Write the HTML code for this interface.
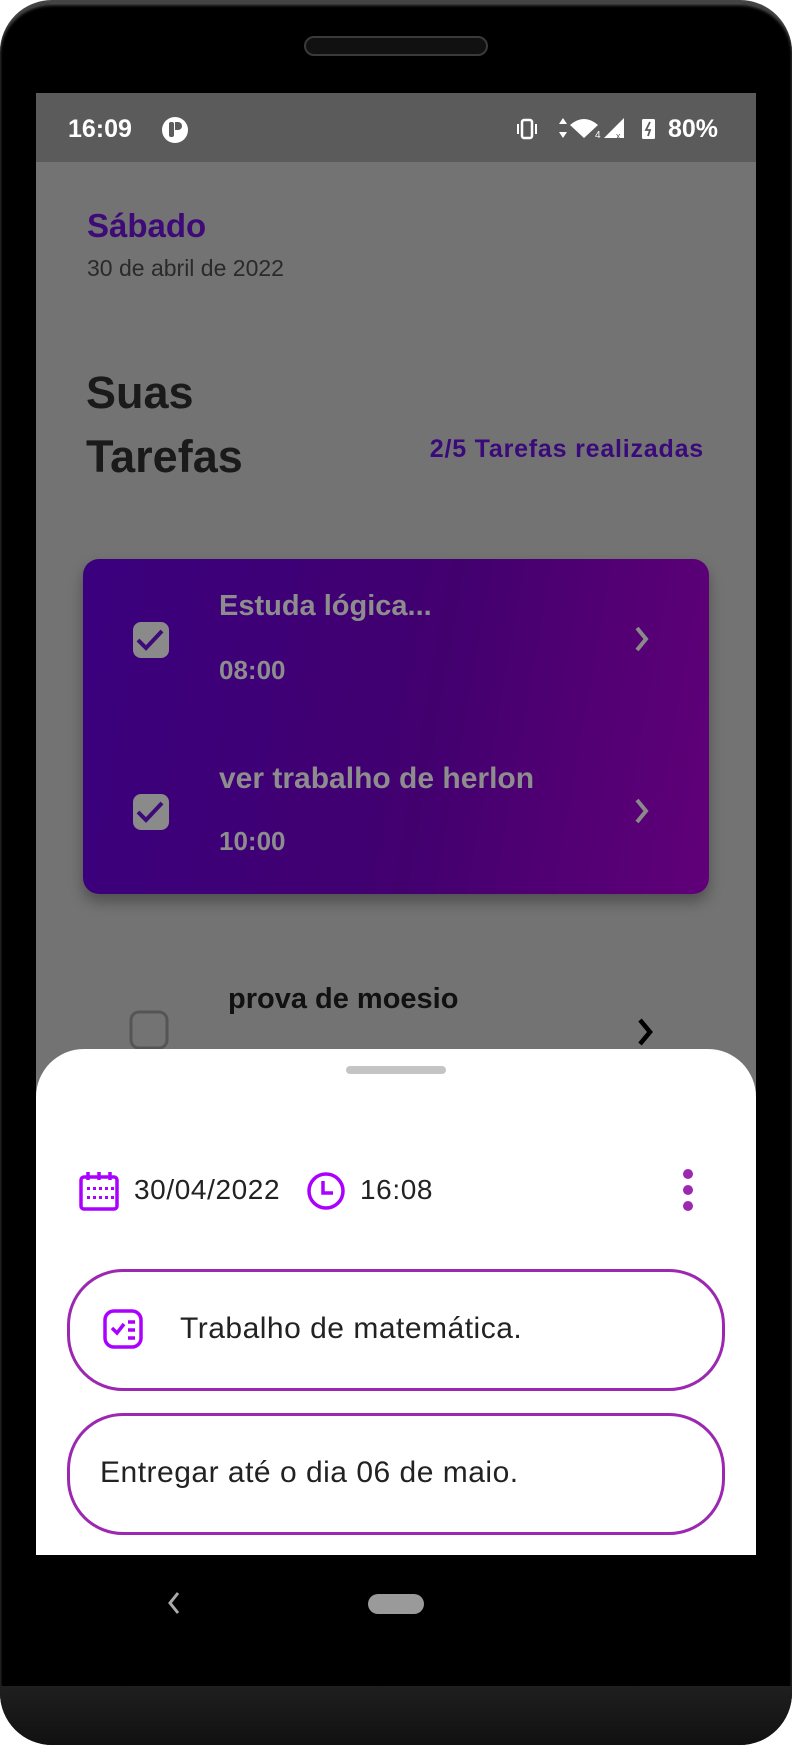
<!DOCTYPE html>
<html><head><meta charset="utf-8">
<style>
*{margin:0;padding:0;box-sizing:border-box}
body{width:792px;height:1745px;background:#fff;position:relative;overflow:hidden;font-family:"Liberation Sans",sans-serif}
.abs{position:absolute}
.phone{left:0;top:0;width:792px;height:1745px;background:#000;border-radius:52px;border-top:3px solid #444;box-shadow:inset 0 2px 3px #555}
.bottom{left:0;top:1686px;width:792px;height:59px;background:linear-gradient(#1f1f1f,#111);border-radius:0 0 52px 52px}
.speaker{left:304px;top:36px;width:184px;height:20px;border-radius:10px;background:#111;border:2px solid #3a3a3a}
.screen{left:36px;top:93px;width:720px;height:1462px;background:#737373;overflow:hidden}
.status{left:0;top:0;width:720px;height:69px;background:#5b5b5b;color:#fff}
.t{position:absolute;white-space:nowrap}
</style></head><body>
<div class="abs phone"></div>
<div class="abs bottom"></div>
<div class="abs speaker"></div>
<div class="abs screen">
 <div class="abs status">
  <div class="t" style="left:32px;top:22px;font-size:25px;font-weight:bold">16:09</div>
  <div class="abs" style="left:126px;top:24px;width:26px;height:26px;border-radius:50%;background:#fff"><div class="abs" style="left:7px;top:5px;width:5px;height:15px;background:#5b5b5b;border-radius:2px"></div><div class="abs" style="left:13px;top:5px;width:7px;height:8px;background:#5b5b5b;border-radius:0 4px 4px 0"></div></div>
  <svg class="abs" style="left:478px;top:22px" width="210" height="28" viewBox="478 22 210 28">
   <g fill="#fff">
    <rect x="486" y="27" width="10" height="18" rx="2" fill="none" stroke="#fff" stroke-width="2.5"/>
    <rect x="481" y="31" width="2" height="10"/><rect x="499" y="31" width="2" height="10"/>
    <path d="M527 25l4 6h-8zM527 45l4-6h-8z"/>
    <path d="M534 32q14-12 28 0l-14 13z"/>
    <text x="559" y="45" font-size="10" font-family="Liberation Sans">4</text>
    <path d="M568 45l20-20v20z"/>
    <rect x="606" y="26" width="13" height="20" rx="1.5"/>
   </g>
   <path d="M614 29l-4 8h4l-2 6" stroke="#5b5b5b" stroke-width="1.8" fill="none"/>
   <text x="580" y="46" font-size="9" fill="#5b5b5b" font-family="Liberation Sans">x</text>
  </svg>
  <div class="t" style="left:632px;top:22px;font-size:25px;font-weight:bold">80%</div>
 </div>
 <div class="t" style="left:51px;top:114px;font-size:33px;font-weight:bold;color:#3d0a78">Sábado</div>
 <div class="t" style="left:51px;top:162px;font-size:23px;color:#2a2a2a">30 de abril de 2022</div>
 <div class="t" style="left:50px;top:268px;font-size:45px;font-weight:bold;color:#1a1a1a;line-height:64px">Suas<br>Tarefas</div>
 <div class="t" style="right:52px;top:342px;font-size:25px;font-weight:bold;color:#3a0a7a;letter-spacing:0.8px">2/5 Tarefas realizadas</div>
 <div class="abs" style="left:47px;top:466px;width:626px;height:335px;border-radius:16px;background:linear-gradient(100deg,#3a007e 0%,#42006f 55%,#610078 100%);box-shadow:0 8px 14px rgba(0,0,0,.3)"></div>
 <svg class="abs" style="left:0;top:0" width="720" height="1000">
  <g fill="#8a8a8a">
   <rect x="97" y="529" width="36" height="36" rx="8"/>
   <rect x="97" y="701" width="36" height="36" rx="8"/>
  </g>
  <g stroke="#3d0a78" stroke-width="4" fill="none">
   <path d="M102 547l8 8 16-17"/><path d="M102 719l8 8 16-17"/>
  </g>
  <g stroke="#8a8a8a" stroke-width="4" fill="none">
   <path d="M601 535l9 11-9 11"/><path d="M601 707l9 11-9 11"/>
  </g>
  <rect x="95" y="919" width="36" height="36" rx="8" fill="none" stroke="#555" stroke-width="3"/>
  <path d="M604 927l10 12-10 12" stroke="#000" stroke-width="4.5" fill="none"/>
 </svg>
 <div class="t" style="left:183px;top:497px;font-size:29px;font-weight:bold;color:#8d8d8d">Estuda lógica...</div>
 <div class="t" style="left:183px;top:562px;font-size:26px;font-weight:bold;color:#8d8d8d">08:00</div>
 <div class="t" style="left:183px;top:669px;font-size:30px;font-weight:bold;color:#8d8d8d">ver trabalho de herlon</div>
 <div class="t" style="left:183px;top:733px;font-size:26px;font-weight:bold;color:#8d8d8d">10:00</div>
 <div class="t" style="left:192px;top:890px;font-size:29px;font-weight:bold;color:#111">prova de moesio</div>
 <div class="abs" style="left:0;top:956px;width:720px;height:520px;background:#fff;border-radius:48px 48px 0 0">
  <div class="abs" style="left:310px;top:17px;width:100px;height:8px;border-radius:4px;background:#c4c4c4"></div>
  <svg class="abs" style="left:0;top:0" width="720" height="400">
   <g stroke="#aa00ff" stroke-width="3.5" fill="none">
    <rect x="45" y="128" width="36" height="32" rx="3"/>
    <path d="M52 123v8M63 123v8M74 123v8"/>
    <circle cx="290" cy="142" r="17"/>
    <path d="M287 132v12h10"/>
    <rect x="69" y="262" width="36" height="36" rx="9"/>
    <path d="M76 279l5 5 7-9M92 273h7M92 281h7M92 289h7"/>
   </g>
   <g fill="#aa00ff">
    <rect x="51" y="138" width="3" height="3"/><rect x="57" y="138" width="3" height="3"/><rect x="63" y="138" width="3" height="3"/><rect x="69" y="138" width="3" height="3"/><rect x="75" y="138" width="3" height="3"/>
    <rect x="51" y="147" width="3" height="3"/><rect x="57" y="147" width="3" height="3"/><rect x="63" y="147" width="3" height="3"/><rect x="69" y="147" width="3" height="3"/><rect x="75" y="147" width="3" height="3"/>
   </g>
   <g fill="#9c27b0"><circle cx="652" cy="125" r="5"/><circle cx="652" cy="141" r="5"/><circle cx="652" cy="157" r="5"/></g>
  </svg>
  <div class="t" style="left:98px;top:125px;font-size:28px;color:#222;letter-spacing:0.6px">30/04/2022</div>
  <div class="t" style="left:324px;top:125px;font-size:28px;color:#222;letter-spacing:0.6px">16:08</div>
  <div class="abs" style="left:31px;top:220px;width:658px;height:122px;border:3.5px solid #9c27b0;border-radius:56px"></div>
  <div class="t" style="left:144px;top:263px;font-size:30px;color:#222;letter-spacing:0.5px">Trabalho de matemática.</div>
  <div class="abs" style="left:31px;top:364px;width:658px;height:122px;border:3.5px solid #9c27b0;border-radius:56px"></div>
  <div class="t" style="left:64px;top:407px;font-size:30px;color:#222;letter-spacing:0.5px">Entregar até o dia 06 de maio.</div>
 </div>
</div>
<svg class="abs" style="left:160px;top:1588px" width="30" height="30"><path d="M18 5l-8 10 8 10" stroke="#aaa" stroke-width="3" fill="none"/></svg>
<div class="abs" style="left:368px;top:1594px;width:56px;height:20px;border-radius:10px;background:#9a9a9a"></div>
</body></html>
